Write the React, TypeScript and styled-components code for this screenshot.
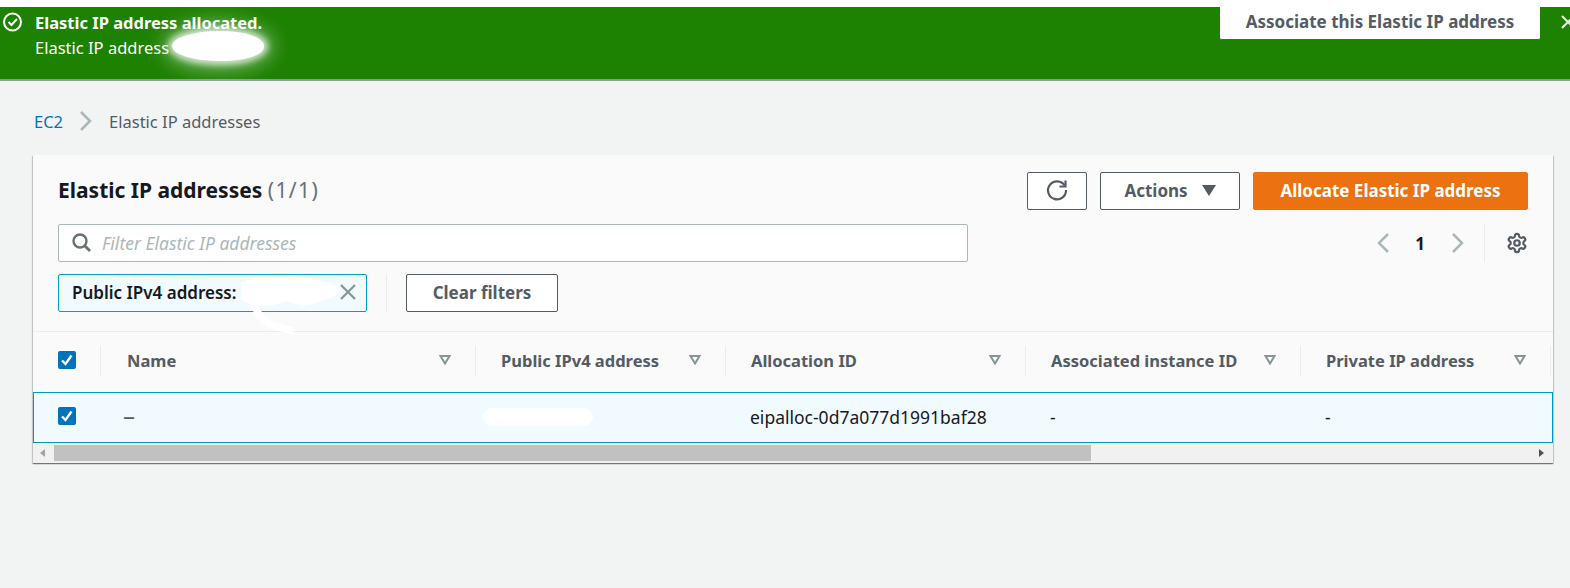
import * as React from 'react';

import styled, { createGlobalStyle } from 'styled-components';

//#######
// Style
//#######
const GlobalStyle = createGlobalStyle`
  html, body {
    margin: 0;
    padding: 0;
    background: #f2f3f3;
    font-family: "Noto Sans", "Liberation Sans", sans-serif;
    overflow: hidden;
  }
`;

const Page = styled.div`
  width: 1570px;
  height: 588px;
  overflow: hidden;
  background: #f2f3f3;
`;

const Flash = styled.div`
  position: relative;
  display: flex;
  justify-content: space-between;
  box-sizing: border-box;
  height: 81px;
  border-top: 7px solid #ffffff;
  border-bottom: 2px solid #8f9a9b;
  background: #1d8102;
  color: #ffffff;
  padding-left: 3px;
`;

const FlashBody = styled.div`
  display: flex;
  gap: 12px;
  padding-top: 3px;
`;

const FlashIcon = styled.span`
  display: flex;
  padding-top: 2px;
  height: 20px;
`;

const FlashText = styled.div`
  font-size: 16.5px;
  line-height: 25px;
`;

const FlashTitle = styled.div`
  font-weight: 700;
`;

const FlashActions = styled.div`
  display: flex;
  align-items: flex-start;
  gap: 20px;
  margin-right: -6px;
`;

const FlashButton = styled.button`
  width: 320px;
  height: 33px;
  padding: 0 0 3px;
  border: 0;
  border-bottom: 1px solid #545b64;
  border-radius: 0 0 2px 2px;
  background: #ffffff;
  color: #545b64;
  font: 700 17px "Noto Sans", sans-serif;
`;

const FlashClose = styled.span`
  display: flex;
  padding-top: 7px;
`;

const FlashBlot = styled.div`
  position: absolute;
  left: 172px;
  top: 24px;
  width: 92px;
  height: 30px;
  border-radius: 50% 48% 46% 50%;
  background: #ffffff;
  box-shadow: 0 0 6px 4px rgba(255, 255, 255, 0.7), 0 0 20px 9px rgba(255, 255, 255, 0.4);
`;

const Crumbs = styled.nav`
  display: flex;
  align-items: center;
  height: 20px;
  padding: 30px 0 24px 34px;
  font-size: 16.5px;
  color: #545b64;
`;

const CrumbLink = styled.a`
  color: #0073bb;
`;

const CrumbSep = styled.span`
  display: flex;
  margin: 0 16px 0 16px;
`;

const Panel = styled.section`
  box-sizing: border-box;
  width: 1520px;
  height: 308px;
  margin-left: 33px;
  background: #fafafa;
  box-shadow: 0 1px 1px 0 rgba(0, 28, 36, 0.4), 1px 1px 1px 0 rgba(0, 28, 36, 0.15),
    -1px 1px 1px 0 rgba(0, 28, 36, 0.15);
`;

const PanelHead = styled.div`
  box-sizing: border-box;
  height: 177px;
  padding: 17px 25px 0;
  border-bottom: 1px solid #eaeded;
`;

const TitleRow = styled.div`
  display: flex;
  align-items: center;
  justify-content: space-between;
  height: 38px;
`;

const Title = styled.h2`
  margin: 0 0 2px;
  color: #16191f;
  font-size: 21px;
  font-weight: 700;
`;

const Count = styled.span`
  color: #687078;
  font-weight: 400;
  letter-spacing: 1.4px;
`;

const TitleActions = styled.div`
  display: flex;
  gap: 13px;
`;

const Button = styled.button<{ $width: number; $primary?: boolean }>`
  display: flex;
  align-items: center;
  justify-content: center;
  gap: 14px;
  box-sizing: border-box;
  width: ${(props) => props.$width}px;
  height: 38px;
  padding: 0 0 2px;
  border: 1px solid ${(props) => (props.$primary ? '#ec7211' : '#545b64')};
  border-radius: 2px;
  background: ${(props) => (props.$primary ? '#ec7211' : '#ffffff')};
  color: ${(props) => (props.$primary ? '#ffffff' : '#545b64')};
  font: 700 17px "Noto Sans", sans-serif;
`;

const FilterRow = styled.div`
  display: flex;
  align-items: center;
  margin-top: 14px;
  height: 38px;
`;

const FilterInput = styled.div`
  display: flex;
  align-items: center;
  gap: 11px;
  box-sizing: border-box;
  width: 910px;
  height: 38px;
  padding: 0 0 1px 13px;
  border: 1px solid #aab7b8;
  border-radius: 2px;
  background: #ffffff;
  color: #aab7b8;
  font-size: 17.5px;
  font-style: italic;
`;

const Pager = styled.div`
  display: flex;
  align-items: center;
  height: 38px;
  margin-left: auto;
  color: #16191f;
  font-weight: 700;
  font-size: 17px;
`;

const PagerNumber = styled.span`
  margin: 0 26px 0 25px;
`;

const PagerGear = styled.span`
  display: flex;
  align-items: center;
  height: 38px;
  margin-left: 19px;
  padding-left: 21px;
  border-left: 1px solid #eaeded;
`;

const TokenRow = styled.div`
  display: flex;
  align-items: center;
  margin-top: 12px;
`;

const Token = styled.div`
  position: relative;
  display: flex;
  align-items: center;
  justify-content: space-between;
  box-sizing: border-box;
  width: 309px;
  height: 38px;
  padding: 0 9px 2px 13px;
  border: 1px solid #00a1c9;
  border-radius: 2px;
  background: #f1faff;
  color: #16191f;
  font-size: 17px;
  font-weight: 600;
`;

const TokenBlot = styled.svg`
  position: absolute;
  left: 180px;
  top: 0;
  overflow: visible;
`;

const TokenDivider = styled.span`
  width: 1px;
  height: 38px;
  margin: 0 19px;
  background: #eaeded;
`;

const Table = styled.div`
  display: grid;
  grid-template-columns: 68px 375px 250px 300px 275px 250px 2px;
  box-sizing: border-box;
  height: 60px;
  padding-bottom: 2px;
  align-items: center;
`;

const HeadCell = styled.div`
  display: flex;
  align-items: center;
  justify-content: space-between;
  box-sizing: border-box;
  height: 30px;
  padding: 0 24px 2px 25px;
  border-right: 1px solid #eaeded;
  color: #545b64;
  font-size: 16.5px;
  font-weight: 700;
`;

const NameCell = styled(HeadCell)`
  padding-left: 26px;
`;

const CheckCell = styled(HeadCell)`
  padding: 0 0 3px 25px;
`;

const Row = styled.div`
  display: grid;
  grid-template-columns: 67px 375px 250px 300px 275px 250px 1px;
  align-items: center;
  box-sizing: border-box;
  height: 51px;
  border: 1px solid #0099bd;
  background: #f1faff;
  color: #16191f;
  font-size: 17.5px;
`;

const RowCell = styled.div`
  padding: 0 0 2px 24px;
  position: relative;
`;

const RowCheck = styled.div`
  display: flex;
  padding: 0 0 4px 24px;
`;

const MutedDash = styled.span`
  margin-left: -2px;
  color: #545b64;
  font-size: 24px;
  line-height: 20px;
`;

const CellBlot = styled.div`
  position: absolute;
  left: 7px;
  top: -9px;
  width: 110px;
  height: 18px;
  border-radius: 9px;
  background: #ffffff;
`;

const Scrollbar = styled.div`
  display: flex;
  align-items: center;
  box-sizing: border-box;
  height: 20px;
  padding: 0 9px 0 7px;
  background: #f1f1f1;
`;

const ScrollArrow = styled.svg`
  flex: none;
`;

const ScrollTrack = styled.div`
  flex: 1;
  height: 16px;
  margin: 0 0 0 9px;
`;

const ScrollThumb = styled.div`
  width: 1037px;
  height: 16px;
  background: #c1c1c1;
`;

//#############################################################
// Constants, Variables & Functions defined outside components
//#############################################################
const COLUMNS = [
  'Public IPv4 address',
  'Allocation ID',
  'Associated instance ID',
  'Private IP address',
];

const Chevron = ({ left }: { left?: boolean }) => (
  <svg width="14" height="22" viewBox="0 0 14 22" fill="none">
    <path
      d={left ? 'M12 2 3 11l9 9' : 'M2 2l9 9-9 9'}
      stroke="#aab7b8"
      strokeWidth="2.5"
    />
  </svg>
);

const SortIcon = () => (
  <svg width="12" height="10" viewBox="0 0 12 10" fill="none">
    <path d="M1.5 1h9L6 8.5z" stroke="#879596" strokeWidth="2" />
  </svg>
);

const CheckBox = () => (
  <svg width="18" height="18" viewBox="0 0 18 18">
    <rect width="18" height="18" rx="2" fill="#0073bb" />
    <path d="M4 9.5l3.5 3.5L13.5 4.5" stroke="#fff" strokeWidth="2.4" fill="none" />
  </svg>
);

//###############
// App component
//###############
const App = () => {
  return (
    <Page>
      <GlobalStyle />
      <Flash>
        <FlashBody>
          <FlashIcon>
            <svg width="20" height="20" viewBox="0 0 20 20" fill="none">
              <circle cx="9.5" cy="10" r="8.5" stroke="#fff" strokeWidth="2" />
              <path d="M5.5 10l3 3 5.5-6" stroke="#fff" strokeWidth="2" />
            </svg>
          </FlashIcon>
          <FlashText>
            <FlashTitle>Elastic IP address allocated.</FlashTitle>
            <div>Elastic IP address</div>
          </FlashText>
        </FlashBody>
        <FlashBlot />
        <FlashActions>
          <FlashButton>Associate this Elastic IP address</FlashButton>
          <FlashClose>
            <svg width="16" height="16" viewBox="0 0 16 16" fill="none">
              <path d="M2 2l12 12M14 2 2 14" stroke="#e6f0e2" strokeWidth="2" />
            </svg>
          </FlashClose>
        </FlashActions>
      </Flash>

      <Crumbs>
        <CrumbLink>EC2</CrumbLink>
        <CrumbSep>
          <Chevron />
        </CrumbSep>
        Elastic IP addresses
      </Crumbs>

      <Panel>
        <PanelHead>
          <TitleRow>
            <Title>
              Elastic IP addresses <Count>(1/1)</Count>
            </Title>
            <TitleActions>
              <Button $width={60} aria-label="Refresh">
                <svg width="24" height="24" viewBox="0 0 24 24" fill="none">
                  <path
                    d="M19.6 7.5A9 9 0 1 0 21 12"
                    stroke="#545b64"
                    strokeWidth="2.2"
                  />
                  <path d="M20.5 2.5v6h-6" stroke="#545b64" strokeWidth="2.2" />
                </svg>
              </Button>
              <Button $width={140}>
                Actions
                <svg width="14" height="11" viewBox="0 0 14 11">
                  <path d="M0 0h14L7 11z" fill="#545b64" />
                </svg>
              </Button>
              <Button $width={275} $primary>
                Allocate Elastic IP address
              </Button>
            </TitleActions>
          </TitleRow>

          <FilterRow>
            <FilterInput>
              <svg width="19" height="19" viewBox="0 0 19 19" fill="none">
                <circle cx="8" cy="8" r="6.5" stroke="#687078" strokeWidth="2.4" />
                <path d="M12.5 12.5l5.5 5.5" stroke="#687078" strokeWidth="2.8" />
              </svg>
              Filter Elastic IP addresses
            </FilterInput>
            <Pager>
              <Chevron left />
              <PagerNumber>1</PagerNumber>
              <Chevron />
              <PagerGear>
                <svg
                  width="22"
                  height="22"
                  viewBox="0 0 24 24"
                  fill="none"
                  stroke="#545b64"
                  strokeWidth="2.4"
                >
                  <path d="M12.22 2h-.44a2 2 0 0 0-2 2v.18a2 2 0 0 1-1 1.73l-.43.25a2 2 0 0 1-2 0l-.15-.08a2 2 0 0 0-2.73.73l-.22.38a2 2 0 0 0 .73 2.73l.15.1a2 2 0 0 1 1 1.72v.51a2 2 0 0 1-1 1.74l-.15.09a2 2 0 0 0-.73 2.73l.22.38a2 2 0 0 0 2.73.73l.15-.08a2 2 0 0 1 2 0l.43.25a2 2 0 0 1 1 1.73V20a2 2 0 0 0 2 2h.44a2 2 0 0 0 2-2v-.18a2 2 0 0 1 1-1.73l.43-.25a2 2 0 0 1 2 0l.15.08a2 2 0 0 0 2.73-.73l.22-.39a2 2 0 0 0-.73-2.73l-.15-.08a2 2 0 0 1-1-1.74v-.5a2 2 0 0 1 1-1.74l.15-.09a2 2 0 0 0 .73-2.73l-.22-.38a2 2 0 0 0-2.73-.73l-.15.08a2 2 0 0 1-2 0l-.43-.25a2 2 0 0 1-1-1.73V4a2 2 0 0 0-2-2z" />
                  <circle cx="12" cy="12" r="3" />
                </svg>
              </PagerGear>
            </Pager>
          </FilterRow>

          <TokenRow>
            <Token>
              Public IPv4 address:
              <svg width="18" height="18" viewBox="0 0 18 18" fill="none">
                <path d="M2 2l14 14M16 2 2 16" stroke="#879596" strokeWidth="2.2" />
              </svg>
              <TokenBlot width="120" height="60" viewBox="0 0 120 60">
                <path
                  d="M2 8C10 0 90 0 100 14 100 24 80 26 70 30 60 34 52 26 46 26 30 34 10 30 2 24z"
                  fill="#fff"
                />
                <path d="M14 26c2 10 10 20 18 24l22 6" stroke="#fff" strokeWidth="7" fill="none" />
              </TokenBlot>
            </Token>
            <TokenDivider />
            <Button $width={152}>Clear filters</Button>
          </TokenRow>
        </PanelHead>

        <Table>
          <CheckCell>
            <CheckBox />
          </CheckCell>
          <NameCell>
            Name
            <SortIcon />
          </NameCell>
          {COLUMNS.map((column) => (
            <HeadCell key={column}>
              {column}
              <SortIcon />
            </HeadCell>
          ))}
        </Table>

        <Row>
          <RowCheck>
            <CheckBox />
          </RowCheck>
          <RowCell>
            <MutedDash>–</MutedDash>
          </RowCell>
          <RowCell>
            <CellBlot />
          </RowCell>
          <RowCell>eipalloc-0d7a077d1991baf28</RowCell>
          <RowCell>-</RowCell>
          <RowCell>-</RowCell>
        </Row>

        <Scrollbar>
          <ScrollArrow width="5" height="8" viewBox="0 0 5 8">
            <path d="M5 0v8L0 4z" fill="#a3a3a3" />
          </ScrollArrow>
          <ScrollTrack>
            <ScrollThumb />
          </ScrollTrack>
          <ScrollArrow width="5" height="8" viewBox="0 0 5 8">
            <path d="M0 0v8l5-4z" fill="#505050" />
          </ScrollArrow>
        </Scrollbar>
      </Panel>
    </Page>
  );
};

export default App;
